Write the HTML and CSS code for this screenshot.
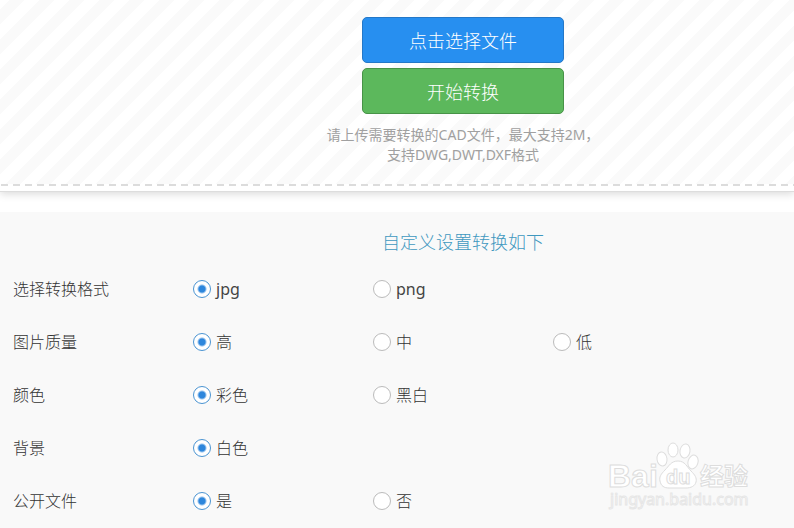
FILE: index.html
```html
<!DOCTYPE html>
<html lang="zh-CN">
<head>
  <meta charset="UTF-8" />
  <meta name="viewport" content="width=device-width, initial-scale=1.0" />
  <title>CAD文件转换</title>
  <link rel="stylesheet" href="styles.css">
</head>
<body>

  <div class="uploader">
    <div class="drop-area">
      <button type="button" class="btn btn-primary">点击选择文件</button>
      <button type="submit" form="settings" class="btn btn-success">开始转换</button>
      <p class="hint">请上传需要转换的CAD文件，最大支持2M，<br>支持DWG,DWT,DXF格式</p>
    </div>
  </div>

  <form class="settings" id="settings">
    <h2 class="settings-title">自定义设置转换如下</h2>

    <div class="row" role="radiogroup" aria-labelledby="l-format">
      <span class="row-label" id="l-format">选择转换格式</span>
      <label class="option latin"><input type="radio" name="format" value="jpg" checked>jpg</label>
      <label class="option latin"><input type="radio" name="format" value="png">png</label>
    </div>

    <div class="row" role="radiogroup" aria-labelledby="l-quality">
      <span class="row-label" id="l-quality">图片质量</span>
      <label class="option"><input type="radio" name="quality" value="high" checked>高</label>
      <label class="option"><input type="radio" name="quality" value="mid">中</label>
      <label class="option"><input type="radio" name="quality" value="low">低</label>
    </div>

    <div class="row" role="radiogroup" aria-labelledby="l-color">
      <span class="row-label" id="l-color">颜色</span>
      <label class="option"><input type="radio" name="color" value="color" checked>彩色</label>
      <label class="option"><input type="radio" name="color" value="gray">黑白</label>
    </div>

    <div class="row" role="radiogroup" aria-labelledby="l-bg">
      <span class="row-label" id="l-bg">背景</span>
      <label class="option"><input type="radio" name="bg" value="white" checked>白色</label>
    </div>

    <div class="row" role="radiogroup" aria-labelledby="l-public">
      <span class="row-label" id="l-public">公开文件</span>
      <label class="option"><input type="radio" name="public" value="yes" checked>是</label>
      <label class="option"><input type="radio" name="public" value="no">否</label>
    </div>
  </form>

  <svg class="watermark" width="150" height="74" viewBox="0 0 150 74">
    <text class="wm-brand" x="4" y="45">Bai</text>
    <!-- paw -->
    <g class="wm-paw">
      <ellipse cx="58" cy="17" rx="5" ry="7" transform="rotate(-8 58 17)" />
      <ellipse cx="69" cy="8" rx="5" ry="7" />
      <ellipse cx="81" cy="9" rx="5" ry="7" transform="rotate(10 81 9)" />
      <ellipse cx="89" cy="20" rx="5" ry="7" transform="rotate(16 89 20)" />
      <path d="M74 19C67 19 65 24 61 28C57 32 55 35 56 39C57 44 60 46 65 46H82C87 46 91 44 92 40C93 36 91 33 87 29C83 25 81 19 74 19Z" />
    </g>
    <text class="wm-du" x="62" y="42">du</text>
    <text class="wm-cn" x="96" y="43">经验</text>
    <text class="wm-url" x="6" y="63">jingyan.baidu.com</text>
  </svg>

</body>
</html>
```

FILE: styles.css
```css
* { margin: 0; padding: 0; box-sizing: border-box; }
:root {
  --primary: #278ff0;
  --success: #5cb85c;
  --panel: #f9f9f9;
}
body {
  position: relative;
  display: flex;
  flex-direction: column;
  min-height: 100vh;
  font-family: "Noto Sans", "Noto Sans CJK SC", sans-serif;
  font-size: 16px;
  font-weight: 300;
  color: #333;
  background: #fff;
}
.uploader {
  padding-bottom: 5px;
  border-bottom: 1px solid #ddd;
  box-shadow: 0 2px 8px rgba(0,0,0,0.15);
  background: #fff;
}
/* diagonal stripes with a dashed line under them */
.drop-area {
  display: flex;
  flex-direction: column;
  align-items: center;
  gap: 5px;
  padding: 17px 0 21px 132px;
  background:
    repeating-linear-gradient(90deg, #fff 0 1px, #dcdcdc 1px 8px, #fff 8px 12px) left bottom / 100% 2px no-repeat,
    linear-gradient(135deg, #fafafa 25%, #fff 25%, #fff 50%, #fafafa 50%, #fafafa 75%, #fff 75%) 10px 0 / 30px 30px;
}
.btn {
  width: 202px;
  height: 46px;
  border: 1px solid;
  border-radius: 5px;
  font-family: inherit;
  font-size: 18px;
  font-weight: 300;
  color: #fff;
  cursor: pointer;
}
.btn-primary {
  background: var(--primary);
  border-color: #2478c8;
}
.btn-success {
  background: var(--success);
  border-color: #479347;
}
.hint {
  margin-top: 6px;
  font-size: 14px;
  font-weight: 400;
  line-height: 20px;
  text-align: center;
  color: #a0a0a0;
}
.settings {
  flex: 1;
  margin-top: 20px;
  padding: 20px 0 0 13px;
  background: var(--panel);
}
.settings-title {
  padding-left: 119px;
  margin-bottom: 10px;
  font-size: 18px;
  font-weight: 300;
  line-height: 20px;
  text-align: center;
  color: #3f98bf;
}
.row {
  display: flex;
  align-items: center;
  height: 53px;
  line-height: 20px;
}
.row-label, .option {
  width: 180px;
}
.option {
  display: flex;
  align-items: center;
  gap: 5px;
  cursor: pointer;
}
.latin {
  font-weight: 400;
  color: #444;
}
.option input {
  appearance: none;
  width: 18px;
  height: 18px;
  border: 1px solid #bbb;
  border-radius: 50%;
  background: #fff;
}
.option input:checked {
  border-color: #4a94d2;
  background: radial-gradient(circle, #2d86dc 3px, #fff 5px);
}
.watermark {
  position: absolute;
  right: 40px;
  bottom: 12px;
  pointer-events: none;
}
.watermark text, .wm-paw {
  fill: #fff;
  stroke: #ddd;
  stroke-width: 1px;
}
.wm-brand {
  font: bold 32px "Liberation Sans", sans-serif;
}
.wm-du {
  font: bold 20px "Liberation Sans", sans-serif;
}
.wm-cn {
  font: bold 24px "Noto Sans CJK SC", sans-serif;
}
.watermark .wm-url {
  font: 16px "Noto Sans", sans-serif;
  stroke: #e6e6e6;
}
```
